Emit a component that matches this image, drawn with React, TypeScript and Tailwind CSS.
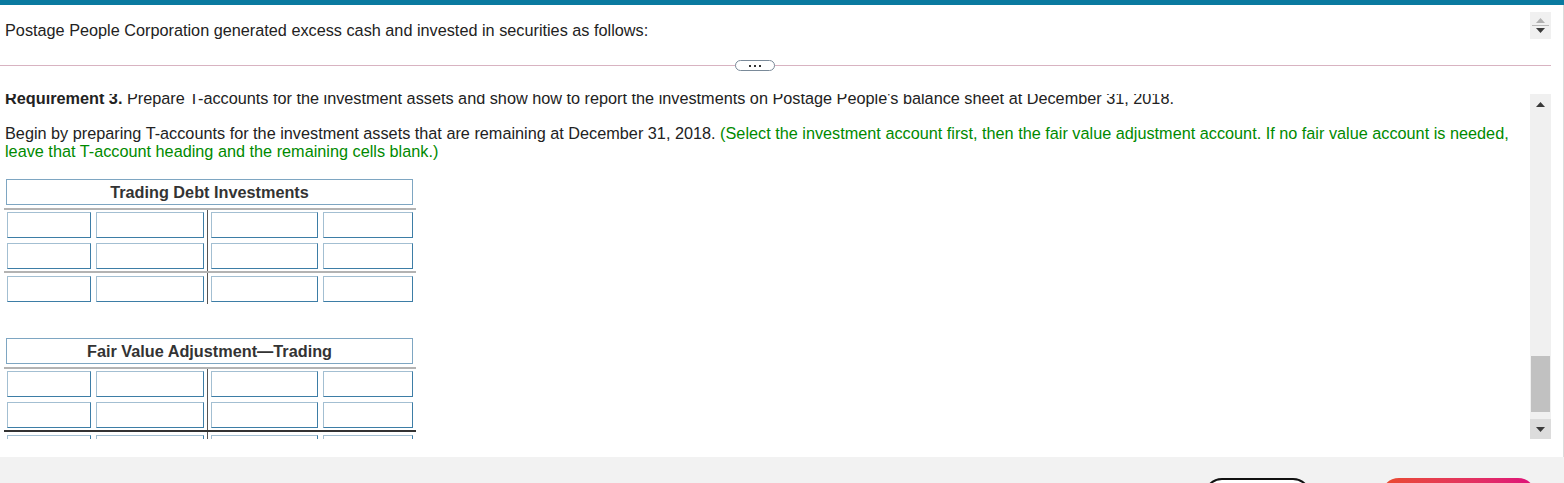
import React from 'react';

function Cell({ w }: { w: string }) {
  return (
    <div
      className={`${w} h-[26px] border border-[#a3bfd2] border-r-[#3d7da6] border-b-[#3d7da6] bg-white`}
    />
  );
}

function HalfRows({ rows, side }: { rows: number; side: 'left' | 'right' }) {
  return (
    <div className="flex flex-col gap-[5px]">
      {Array.from({ length: rows }, (_, i) =>
        side === 'left' ? (
          <div key={i} className="flex gap-[5px] pl-[3px]">
            <Cell w="w-[84px]" />
            <Cell w="w-[108px]" />
          </div>
        ) : (
          <div key={i} className="flex gap-[5px] pl-[3px]">
            <Cell w="w-[107px]" />
            <Cell w="w-[90px]" />
          </div>
        )
      )}
    </div>
  );
}

function Section({ rows, pt, pb }: { rows: number; pt: string; pb: string }) {
  return (
    <div className="flex">
      <div className={`w-[204px] border-r border-[#555] ${pt} ${pb}`}>
        <HalfRows rows={rows} side="left" />
      </div>
      <div className={`${pt} ${pb}`}>
        <HalfRows rows={rows} side="right" />
      </div>
    </div>
  );
}

function TAccount({ title, lastLine }: { title: string; lastLine: string }) {
  return (
    <div className="w-[412px]">
      <div className="ml-[2px] w-[407px] h-[26px] border border-[#7ea6c2] flex items-center justify-center text-[16.25px] font-bold text-[#333]">
        {title}
      </div>
      <div className="mt-[3px] border-t-2 border-[#b3b3b3]" />
      <Section rows={2} pt="pt-[2px]" pb="pb-[2px]" />
      <div className={`border-t-2 ${lastLine}`} />
      <Section rows={1} pt="pt-[3px]" pb="pb-[2px]" />
    </div>
  );
}

function Arrow({ dir, color }: { dir: 'up' | 'down'; color: string }) {
  return (
    <svg width="9" height="5" viewBox="0 0 9 5" className={color}>
      {dir === 'up' ? <path d="M0 5 L4.5 0 L9 5 Z" fill="currentColor" /> : <path d="M0 0 L4.5 5 L9 0 Z" fill="currentColor" />}
    </svg>
  );
}

export default function App() {
  return (
    <div
      className="w-[1564px] h-[483px] flex flex-col bg-[#f2f2f2] overflow-hidden text-[#222]"
      style={{ fontFamily: '"Liberation Sans", Arial, sans-serif' }}
    >
      <div className="h-[5px] shrink-0 bg-[#0a7aa0]" />
      <div className="shrink-0 flex flex-col bg-white border-r border-[#dcdcdc] h-[452px]">
        {/* question pane */}
        <div className="flex h-[60px]">
          <p className="flex-1 pl-[5px] pt-[16px] text-[16.25px] leading-[18px]">
            Postage People Corporation generated excess cash and invested in securities as follows:
          </p>
          <div className="mt-[7px] mr-[12px] w-[21px] h-[27px] bg-[#f0f0f0] flex flex-col items-center justify-center gap-[2px]">
            <Arrow dir="up" color="text-[#b0b0b0]" />
            <div className="w-[17px] border-t border-[#b8b8b8]" />
            <Arrow dir="down" color="text-[#3a3a3a]" />
          </div>
        </div>
        {/* divider */}
        <div className="relative mr-[12px] border-t border-[#d8b3c1]">
          <div className="absolute left-[735px] -top-[6px] w-[40px] h-[11px] rounded-full border border-[#7a8a99] bg-white flex items-center justify-center gap-[3px]">
            <span className="w-[2px] h-[2px] bg-[#333]" />
            <span className="w-[2px] h-[2px] bg-[#333]" />
            <span className="w-[2px] h-[2px] bg-[#333]" />
          </div>
        </div>
        {/* answer pane */}
        <div className="mt-[28px] flex h-[345px]">
          <div className="flex-1 overflow-hidden">
            <div className="-mt-[5px] pl-[5px] pr-[10px] text-[16.25px] leading-[18px]">
              <p>
                <span className="font-bold">Requirement 3.</span> Prepare T-accounts for the investment assets and show how to report the investments on Postage People's balance sheet at December 31, 2018.
              </p>
              <p className="mt-[17px]">
                Begin by preparing T-accounts for the investment assets that are remaining at December 31, 2018.{' '}
                <span className="text-[#008a00]">
                  (Select the investment account first, then the fair value adjustment account. If no fair value account is needed, leave that T-account heading and the remaining cells blank.)
                </span>
              </p>
            </div>
            <div className="mt-[19px] pl-[4px] flex flex-col gap-[34px]">
              <TAccount title="Trading Debt Investments" lastLine="border-[#b3b3b3]" />
              <TAccount title="Fair Value Adjustment—Trading" lastLine="border-[#333]" />
            </div>
          </div>
          <div className="mr-[12px] w-[21px] bg-[#f0f0f0] flex flex-col">
            <div className="h-[21px] flex items-center justify-center">
              <Arrow dir="up" color="text-[#3a3a3a]" />
            </div>
            <div className="flex-1 flex flex-col justify-end pb-[7px]">
              <div className="mx-[1px] h-[56px] bg-[#c1c1c1]" />
            </div>
            <div className="h-[20px] bg-[#dcdcdc] flex items-center justify-center">
              <Arrow dir="down" color="text-[#3a3a3a]" />
            </div>
          </div>
        </div>
      </div>
      <div className="flex-1 flex items-start pt-[21px] pr-[28px] justify-end gap-[70px]">
        <div className="shrink-0 w-[107px] h-[36px] rounded-[18px] border-2 border-[#111] bg-white" />
        <div className="shrink-0 w-[155px] h-[36px] rounded-[18px] bg-gradient-to-r from-[#ea4b2a] to-[#de0a7a]" />
      </div>
    </div>
  );
}
